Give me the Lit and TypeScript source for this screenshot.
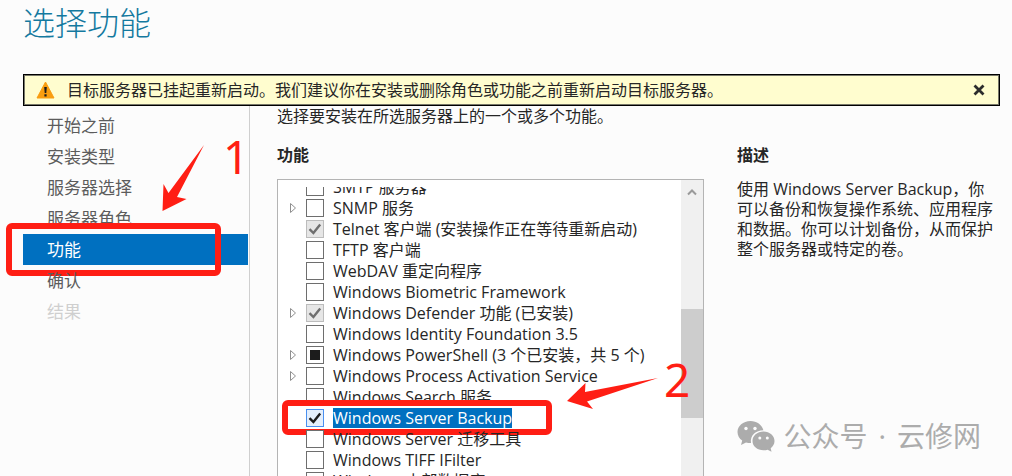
import { LitElement, html, css, svg, nothing } from "lit";
import { customElement, property } from "lit/decorators.js";

type CheckState = "off" | "on" | "installed" | "partial";

interface Feature {
  name: string;
  state: CheckState;
  expandable?: boolean;
  selected?: boolean;
}

const FEATURES: Feature[] = [
  { name: "SMTP 服务器", state: "off" },
  { name: "SNMP 服务", state: "off", expandable: true },
  { name: "Telnet 客户端 (安装操作正在等待重新启动)", state: "installed" },
  { name: "TFTP 客户端", state: "off" },
  { name: "WebDAV 重定向程序", state: "off" },
  { name: "Windows Biometric Framework", state: "off" },
  { name: "Windows Defender 功能 (已安装)", state: "installed", expandable: true },
  { name: "Windows Identity Foundation 3.5", state: "off" },
  { name: "Windows PowerShell (3 个已安装，共 5 个)", state: "partial", expandable: true },
  { name: "Windows Process Activation Service", state: "off", expandable: true },
  { name: "Windows Search 服务", state: "off" },
  { name: "Windows Server Backup", state: "on", selected: true },
  { name: "Windows Server 迁移工具", state: "off" },
  { name: "Windows TIFF IFilter", state: "off" },
  { name: "Windows 内部数据库", state: "off" },
];

const STEPS = ["开始之前", "安装类型", "服务器选择", "服务器角色", "功能", "确认", "结果"];

@customElement("feature-row")
export class FeatureRow extends LitElement {
  @property({ attribute: false }) feature!: Feature;

  static styles = css`
    :host { display: flex; align-items: center; height: 21px; position: relative; }
    .expander {
      width: 8px; height: 12px; margin-right: 9px; padding: 0;
      border: 0; background: none; display: block; flex: none;
    }
    .expander svg { display: block; }
    .blank { width: 8px; margin-right: 9px; flex: none; }
    .check { display: grid; width: 18px; height: 18px; flex: none; margin-right: 9px; }
    .check > * { grid-area: 1 / 1; }
    .check svg { pointer-events: none; }
    .box {
      appearance: none; margin: 0; width: 18px; height: 18px; box-sizing: border-box;
      border: 1px solid #6e6e6e; background: #fff;
    }
    .box.installed { border-color: #bcbcbc; background: #e6e6e6; }
    .box.on { border-color: #4a90f0; background: #e4effc; }
    .name { white-space: nowrap; line-height: 20px; color: #262626; }
    .name.selected { background: #0070c0; color: #fff; }
    .ring {
      position: absolute; left: -7px; top: -7px; width: 270px; height: 35px; box-sizing: border-box;
      border: 6px solid #ff1e14; border-radius: 6px; pointer-events: none;
    }
  `;

  private mark(state: CheckState) {
    if (state === "off") return nothing;
    const color = state === "installed" ? "#6f6f6f" : "#1c1c1c";
    return html`<svg width="18" height="18" viewBox="0 0 18 18">
      ${state === "partial"
        ? svg`<rect x="4" y="4" width="10" height="10" fill=${color} />`
        : svg`<path d="M3.5 9.2 L7.4 13 L14.2 4.4" fill="none" stroke=${color} stroke-width="2.4" />`}
    </svg>`;
  }

  render() {
    const f = this.feature;
    return html`
      ${f.expandable
        ? html`<button class="expander" aria-label="展开">
            <svg width="8" height="12" viewBox="0 0 8 12">
              <path d="M1.5 1.5 L6.5 6 L1.5 10.5 Z" fill="#fff" stroke="#8f8f8f" />
            </svg>
          </button>`
        : html`<span class="blank"></span>`}
      <span class="check">
        <input class="box ${f.state}" id="box" type="checkbox"
          .checked=${f.state === "on" || f.state === "installed"}
          .indeterminate=${f.state === "partial"}
          ?disabled=${f.state === "installed"} />
        ${this.mark(f.state)}
      </span>
      <label class="name ${f.selected ? "selected" : ""}" for="box">${f.name}</label>
      ${f.selected ? html`<span class="ring"></span>` : nothing}
    `;
  }
}

@customElement("app-root")
export class AppRoot extends LitElement {
  static styles = css`
    :host {
      display: flex; flex-direction: column; position: relative;
      height: 100vh; overflow: hidden; box-sizing: border-box;
      background: #fcfcfc; color: #262626;
      font: 16px/20px "Open Sans", "Noto Sans CJK SC", sans-serif;
    }
    .title {
      margin: 0; padding: 0 23px; height: 74px; flex: none;
      font-weight: 300; font-size: 32px; line-height: 42px; color: #14799f;
      font-family: "Noto Sans CJK SC", sans-serif;
    }
    .notice {
      display: flex; align-items: center; flex: none; height: 32px; box-sizing: border-box;
      margin: 0 12px 0 23px; padding: 0 12px;
      border: 1px solid #000; box-shadow: inset 0 0 0 1px #77776a; background: #fffdcf;
    }
    .notice svg { flex: none; }
    .message { flex: 1; margin-left: 12px; white-space: nowrap; }
    .close { border: 0; background: none; padding: 2px; display: block; }
    .close svg { display: block; }
    .body { display: flex; flex: 1; min-height: 0; }
    .steps {
      list-style: none; margin: 0; padding: 4px 1px 0 23px; width: 225px; flex: none;
      border-right: 1px solid #cfcfcf; font-size: 17px;
    }
    .step { position: relative; }
    .step a {
      display: block; height: 31px; line-height: 31px; padding-left: 24px;
      color: #5c5c5c; text-decoration: none;
    }
    .step.current a { background: #0070c0; color: #fff; }
    .step.disabled a { color: #cfcfcf; }
    .ring {
      position: absolute; left: -17px; top: -11px; width: 215px; height: 53px; box-sizing: border-box;
      border: 6px solid #ff1e14; border-radius: 6px; pointer-events: none;
    }
    .main {
      flex: 1; min-width: 0; display: flex; flex-direction: column;
      padding: 0 12px 0 27px;
    }
    .intro { margin: 0; }
    .columns {
      flex: 1; min-height: 0; display: grid; margin-top: 19px;
      grid-template-columns: 427fr 263fr; grid-template-rows: 100%; column-gap: 33px;
    }
    .features { display: flex; flex-direction: column; min-height: 0; min-width: 0; }
    h2 { margin: 0; font-size: 16px; line-height: 20px; font-weight: 700; }
    .list {
      flex: 1; min-height: 0; display: flex; margin-top: 14px; background: #fff;
      border: 1px solid #b4b4b4; border-bottom: 0;
    }
    .viewport {
      flex: 1; min-width: 0; margin-top: 7px; overflow: hidden;
      display: flex; flex-direction: column; justify-content: flex-start;
    }
    .rows { margin-top: -11px; padding-left: 11px; }
    .scroll { width: 22px; flex: none; background: #f0f0f0; }
    .scroll svg { display: block; margin: 8px auto 0; }
    .thumb { height: 109px; margin-top: 113px; background: #cdcdcd; }
    .description { margin: 14px 0 0; }
    .mark { position: absolute; pointer-events: none; }
    .digit { color: #ff1e14; font: 46px/46px "Noto Sans", sans-serif; }
    .one { left: 223px; top: 133px; }
    .two { left: 664px; top: 356px; }
    .arrow-one { left: 160px; top: 142px; }
    .arrow-two { left: 566px; top: 376px; }
    .brand {
      right: 31px; bottom: 20px; display: flex; align-items: center; gap: 8px;
      color: #acacac; font: 28px/40px "Noto Sans", "Noto Sans CJK SC", sans-serif; white-space: nowrap;
    }
    .brand-name { display: flex; gap: 11px; }
  `;

  render() {
    return html`
      <h1 class="title">选择功能</h1>
      <div class="notice" role="alert">
        <svg width="19" height="18" viewBox="0 0 19 18">
          <path d="M9.5 1 L18 17 H1 Z" fill="#f99d10" stroke="#f99d10" stroke-linejoin="round" />
          <path d="M8.2 6 H10.8 L10.3 12 H8.7 Z M8.4 13.2 H10.6 V15.4 H8.4 Z" fill="#1c1c1c" />
        </svg>
        <span class="message">目标服务器已挂起重新启动。我们建议你在安装或删除角色或功能之前重新启动目标服务器。</span>
        <button class="close" aria-label="关闭">
          <svg width="12" height="12" viewBox="0 0 12 12">
            <path d="M1.5 1.5 L10.5 10.5 M10.5 1.5 L1.5 10.5" stroke="#2c2c2c" stroke-width="2.8" />
          </svg>
        </button>
      </div>
      <div class="body">
        <ul class="steps">
          ${STEPS.map(
            (name) => html`<li class="step ${name === "功能" ? "current" : name === "结果" ? "disabled" : ""}">
              <a href="#">${name}</a>
              ${name === "功能" ? html`<span class="ring"></span>` : nothing}
            </li>`
          )}
        </ul>
        <main class="main">
          <p class="intro">选择要安装在所选服务器上的一个或多个功能。</p>
          <div class="columns">
            <section class="features">
              <h2>功能</h2>
              <div class="list">
                <div class="viewport">
                  <div class="rows">
                    ${FEATURES.map((f) => html`<feature-row .feature=${f}></feature-row>`)}
                  </div>
                </div>
                <div class="scroll">
                  <svg width="10" height="8" viewBox="0 0 10 8">
                    <path d="M1 6.5 L5 2.5 L9 6.5" fill="none" stroke="#9a9a9a" stroke-width="2" />
                  </svg>
                  <div class="thumb"></div>
                </div>
              </div>
            </section>
            <section>
              <h2>描述</h2>
              <p class="description">使用 Windows Server Backup，你可以备份和恢复操作系统、应用程序和数据。你可以计划备份，从而保护整个服务器或特定的卷。</p>
            </section>
          </div>
        </main>
      </div>
      <span class="mark digit one">1</span>
      <svg class="mark arrow-one" width="46" height="72" viewBox="0 0 46 72">
        <path d="M44 3 L17 55 L26.5 57 L2.5 69 L3.5 42 L8.5 51 Z" fill="#ff1e14" />
      </svg>
      <span class="mark digit two">2</span>
      <svg class="mark arrow-two" width="94" height="34" viewBox="0 0 94 34">
        <path d="M92 2 L21 25.5 L27 33 L1 25 L19.5 7 L19 16 Z" fill="#ff1e14" />
      </svg>
      <div class="mark brand">
        <svg width="38" height="32" viewBox="0 0 38 32">
          <path fill="#acacac" d="M13.5 1 C6 1 .5 6 .5 12 C.5 15.6 2.4 18.6 5.2 20.6 L4 25 L9 22.4 C10.5 22.9 12 23.1 14 23.1 C12.8 15 19 10.3 26.4 10.2 C25 4.8 19.8 1 13.5 1 Z" />
          <path fill="#acacac" d="M26.5 11.5 C20.2 11.5 15.5 15.8 15.5 21 C15.5 26.2 20.2 30.3 26.5 30.3 C28 30.3 29.4 30.1 30.6 29.7 L34.5 31.7 L33.7 28.2 C36 26.4 37.5 24 37.5 21 C37.5 15.8 32.8 11.5 26.5 11.5 Z" />
          <g fill="#fcfcfc">
            <circle cx="9" cy="8.5" r="1.7" /><circle cx="18" cy="8.5" r="1.7" />
            <circle cx="22.8" cy="18" r="1.5" /><circle cx="30.3" cy="18" r="1.5" />
          </g>
        </svg>
        <span class="brand-name"><span>公众号</span><span>·</span><span>云修网</span></span>
      </div>
    `;
  }
}
